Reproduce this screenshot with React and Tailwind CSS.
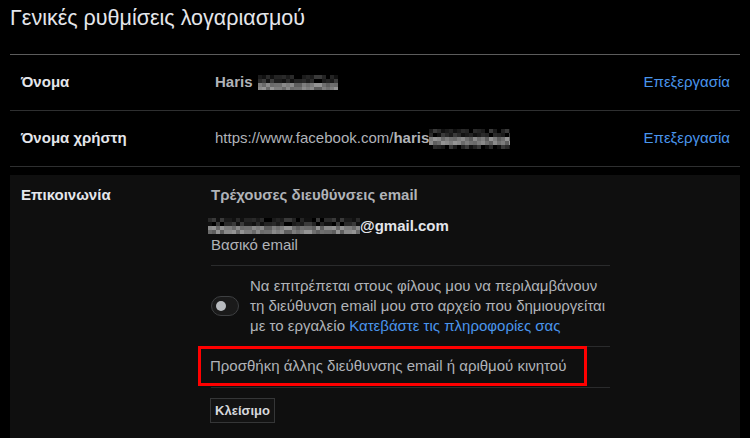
import React from "react";

// pixelated "blurred" strip, like the censored parts of the screenshot
const Blur = ({ width, height, band, seed = 1 }) => {
  const cell = 4;
  const cols = Math.ceil(width / cell);
  const rows = Math.ceil(height / cell);
  const shades = ["#5e5e5e", "#6f6f6f", "#7d7d7d", "#8a8a8a", "#6a6a6a", "#949494"];
  const darks = ["#1b1b1b", "#2a2a2a", "#111111", "#3a3a3a", "#000000", "#242424"];
  const rects = [];
  for (let r = 0; r < rows; r++) {
    for (let c = 0; c < cols; c++) {
      const n = (c * 7 + r * 13 + seed * 5 + ((c * c + seed) % 5)) % 6;
      const inBand = r >= band[0] && r <= band[1];
      rects.push(
        <rect
          key={`${r}-${c}`}
          x={c * cell}
          y={r * cell}
          width={cell}
          height={cell}
          fill={inBand ? shades[n] : darks[n]}
        />
      );
    }
  }
  return (
    <svg width={width} height={height} className="block shrink-0">
      {rects}
    </svg>
  );
};

const Row = ({ label, children }) => (
  <div className="flex items-center h-[56px] border-b border-[#2e2f30]">
    <div className="w-[205px] pl-[11px] text-[15px] font-bold text-[#e4e6eb]">{label}</div>
    <div className="flex-1 flex items-center text-[15px] text-[#b0b3b8]">{children}</div>
    <a className="pr-[10px] text-[15px] text-[#4a95ec] cursor-pointer">Επεξεργασία</a>
  </div>
);

const App = () => {
  return (
    <div className="w-[750px] h-[438px] bg-black overflow-hidden font-['Liberation_Sans',Arial,sans-serif]">
      <div className="px-[10px]">
        <h1 className="pt-[4px] pb-[22px] text-[21.5px] leading-[28px] text-[#e4e6eb] border-b border-[#5c5c5c]">
          Γενικές ρυθμίσεις λογαριασμού
        </h1>

        <Row label="Όνομα">
          <span className="font-bold">Haris</span>
          <span className="ml-[5px]">
            <Blur width={80} height={15} band={[2, 3]} seed={2} />
          </span>
        </Row>

        <Row label="Όνομα χρήστη">
          <span>https://www.facebook.com/</span>
          <span className="font-bold">haris</span>
          <Blur width={81} height={20} band={[2, 3]} seed={4} />
        </Row>

        {/* expanded contact section */}
        <div className="mt-[8px] bg-[#0f0f0f] h-[300px] flex pt-[11px]">
          <div className="w-[201px] pl-[11px] text-[15px] leading-[18px] font-bold text-[#e4e6eb]">
            Επικοινωνία
          </div>
          <div className="w-[399px] text-[15px] text-[#b0b3b8]">
            <div className="leading-[18px] font-bold">Τρέχουσες διευθύνσεις email</div>
            <div className="mt-[13px] flex items-center h-[18px] -ml-[3px]">
              <Blur width={152} height={16} band={[2, 3]} seed={7} />
              <span className="font-bold text-[#e4e6eb]">@gmail.com</span>
            </div>
            <div className="mt-[1px] leading-[18px]">Βασικό email</div>

            <div className="mt-[11px] border-t border-[#2a2b2c] pt-[10px] pb-[10px] flex items-center">
              <div className="w-[28px] h-[20px] rounded-full border border-[#3e4042] bg-[#1a1a1a] flex items-center pl-[4px] shrink-0">
                <div className="w-[10px] h-[10px] rounded-full bg-[#b8bbbf]" />
              </div>
              <p className="ml-[11px] w-[358px] leading-[20px]">
                Να επιτρέπεται στους φίλους μου να περιλαμβάνουν τη διεύθυνση email μου στο αρχείο
                που δημιουργείται με το εργαλείο{" "}
                <a className="text-[#4a95ec] cursor-pointer">Κατεβάστε τις πληροφορίες σας</a>
              </p>
            </div>

            <div className="relative border-t border-b border-[#2a2b2c] h-[42px] flex items-center">
              <span className="-ml-[1px] -mt-[1px]">
                Προσθήκη άλλης διεύθυνσης email ή αριθμού κινητού
              </span>
              <div className="absolute left-[-13px] top-[-1px] w-[389px] h-[40px] border-[3px] border-[#ff0000]" />
            </div>

            <button className="mt-[10px] w-[65px] h-[25px] border border-[#353637] bg-[#131313] text-[13px] font-bold text-[#d6d8dc] -ml-[1px]">
              Κλείσιμο
            </button>
          </div>
        </div>
      </div>
    </div>
  );
};

export default App;
